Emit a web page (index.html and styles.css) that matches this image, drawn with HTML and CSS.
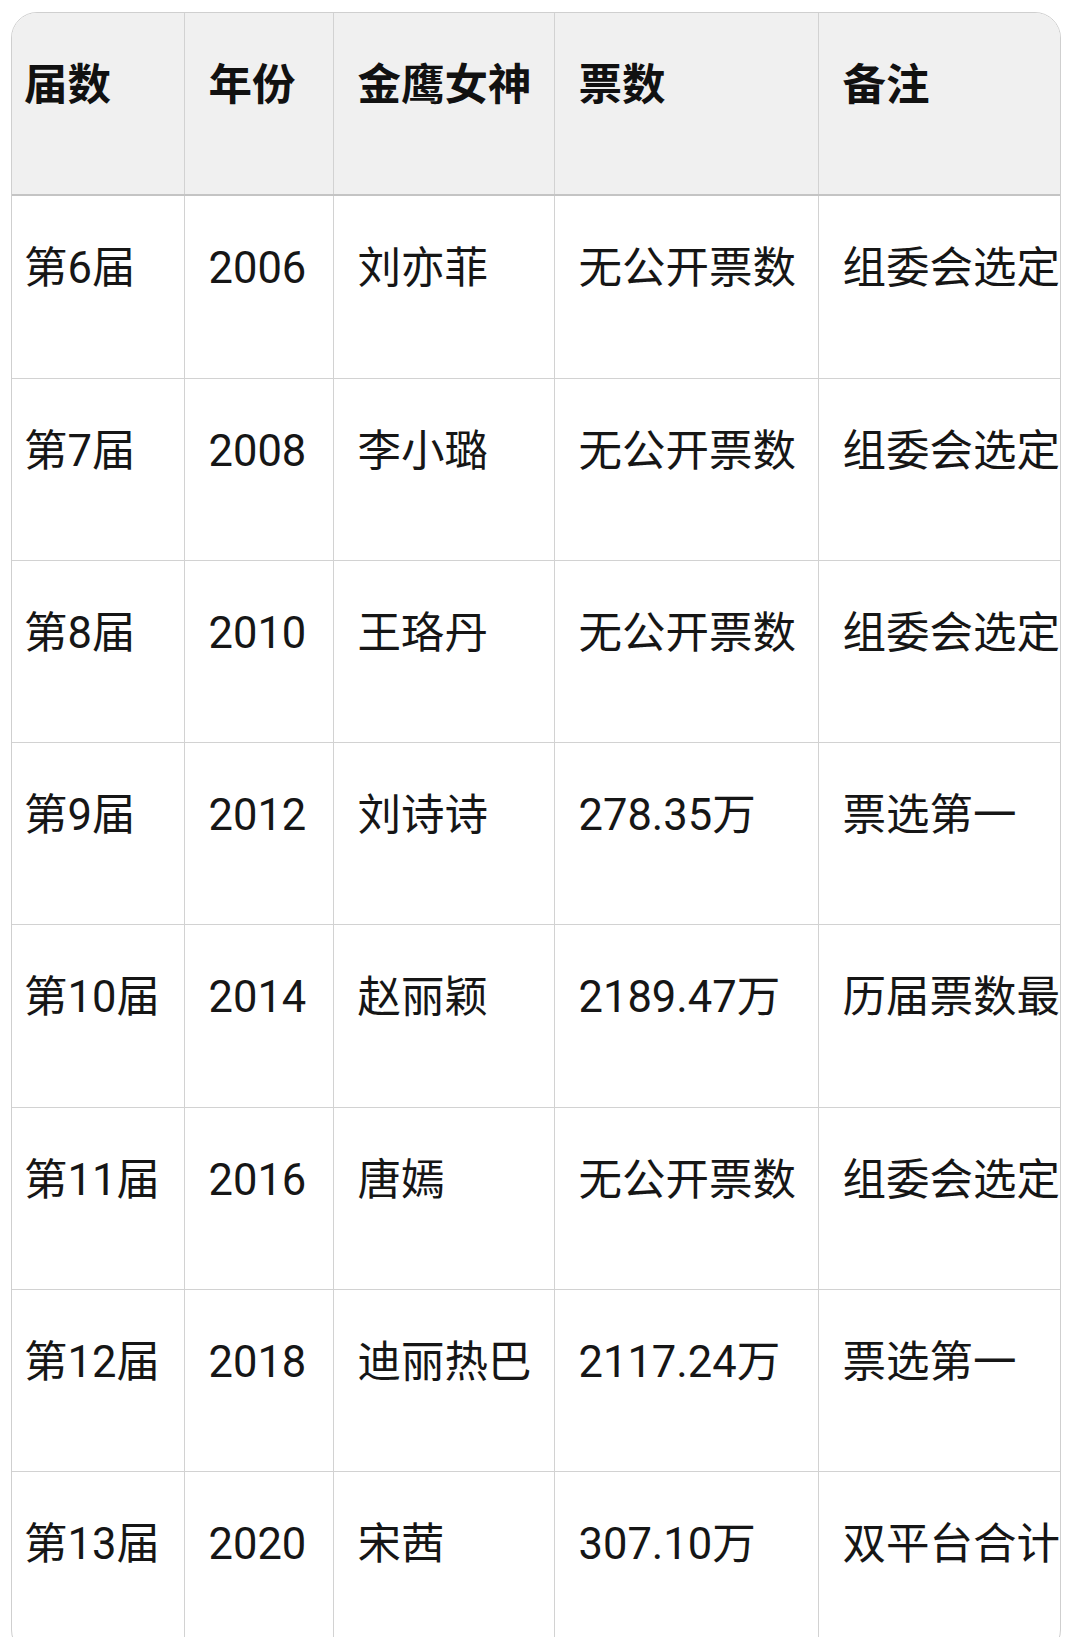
FILE: index.html
```html
<!DOCTYPE html>
<html lang="zh-CN">
<head>
<meta charset="utf-8">
<title>金鹰女神</title>
<link rel="stylesheet" href="styles.css">
</head>
<body>
<div class="table-wrap">
  <table class="data">
    <colgroup>
      <col class="c1"><col class="c2"><col class="c3"><col class="c4"><col class="c5">
    </colgroup>
    <thead>
      <tr><th>届数</th><th>年份</th><th>金鹰女神</th><th>票数</th><th>备注</th></tr>
    </thead>
    <tbody>
      <tr><td>第6届</td><td>2006</td><td>刘亦菲</td><td>无公开票数</td><td>组委会选定</td></tr>
      <tr><td>第7届</td><td>2008</td><td>李小璐</td><td>无公开票数</td><td>组委会选定</td></tr>
      <tr><td>第8届</td><td>2010</td><td>王珞丹</td><td>无公开票数</td><td>组委会选定</td></tr>
      <tr><td>第9届</td><td>2012</td><td>刘诗诗</td><td>278.35万</td><td>票选第一</td></tr>
      <tr><td>第10届</td><td>2014</td><td>赵丽颖</td><td>2189.47万</td><td>历届票数最高</td></tr>
      <tr><td>第11届</td><td>2016</td><td>唐嫣</td><td>无公开票数</td><td>组委会选定</td></tr>
      <tr><td>第12届</td><td>2018</td><td>迪丽热巴</td><td>2117.24万</td><td>票选第一</td></tr>
      <tr><td>第13届</td><td>2020</td><td>宋茜</td><td>307.10万</td><td>双平台合计</td></tr>
    </tbody>
  </table>
</div>
</body>
</html>
```

FILE: styles.css
```css
html, body {
  margin: 0;
  padding: 0;
  background: #ffffff;
}

body {
  padding: 12px 0 0 11px;
  font-family: Roboto, "Noto Sans CJK SC", sans-serif;
  color: #161616;
}

.table-wrap {
  width: 1048px;
  border: 1px solid #cfcfcf;
  border-radius: 26px;
  overflow: hidden;
}

.data {
  width: 1048px;
  border-collapse: collapse;
  table-layout: fixed;
}

.c1 { width: 172px; }
.c2 { width: 149px; }
.c3 { width: 221px; }
.c4 { width: 264px; }
.c5 { width: 242px; }

.data th,
.data td {
  height: 141.3px;
  padding: 40px 0 0 24px;
  vertical-align: top;
  text-align: left;
  font-size: 43.5px;
  line-height: 66px;
  white-space: nowrap;
  overflow: hidden;
  border: 1px solid #d2d2d2;
}

.data th:first-child,
.data td:first-child {
  padding-left: 12px;
  border-left: none;
}

.data th:last-child,
.data td:last-child {
  border-right: none;
}

.data thead tr th {
  border-top: none;
  background: #f0f0f0;
  font-weight: 700;
  color: #111111;
  border-bottom: 2px solid #c4c4c4;
}

.data td {
  font-weight: 400;
}
```
